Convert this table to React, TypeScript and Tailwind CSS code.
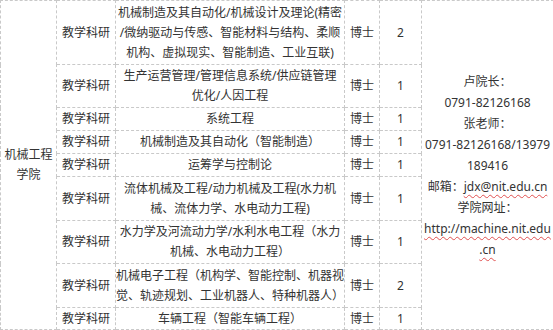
const rows: { spec: string[]; num: string; h: string }[] = [
  {
    spec: [
      "机械制造及其自动化/机械设计及理论(精密",
      "/微纳驱动与传感、智能材料与结构、柔顺",
      "机构、虚拟现实、智能制造、工业互联)",
    ],
    num: "2",
    h: "h-[64px]",
  },
  { spec: ["生产运营管理/管理信息系统/供应链管理", "优化/人因工程"], num: "1", h: "h-[43px]" },
  { spec: ["系统工程"], num: "1", h: "h-[23px]" },
  { spec: ["机械制造及其自动化（智能制造）"], num: "1", h: "h-[23px]" },
  { spec: ["运筹学与控制论"], num: "1", h: "h-[23px]" },
  { spec: ["流体机械及工程/动力机械及工程(水力机", "械、流体力学、水电动力工程)"], num: "1", h: "h-[44px]" },
  { spec: ["水力学及河流动力学/水利水电工程（水力", "机械、水电动力工程）"], num: "1", h: "h-[43px]" },
  { spec: ["机械电子工程（机构学、智能控制、机器视", "觉、轨迹规划、工业机器人、特种机器人）"], num: "2", h: "h-[44px]" },
  { spec: ["车辆工程（智能车辆工程）"], num: "1", h: "h-[22px]" },
];

const cell = "border border-dashed border-[#c9c9c9] p-0 text-center align-middle";
const wavy = "underline decoration-wavy decoration-[#e05050] decoration-[1px] underline-offset-[3px]";

export default function App() {
  return (
    <div className="w-[553px] h-[330px] bg-white overflow-hidden font-['Noto_Sans','Noto_Sans_CJK_SC',sans-serif] text-[12px] leading-[20px] text-[#333]">
      <table className="w-[553px] table-fixed border-collapse">
        <colgroup>
          <col className="w-[56px]" />
          <col className="w-[59px]" />
          <col className="w-[229px]" />
          <col className="w-[35px]" />
          <col className="w-[42px]" />
          <col className="w-[132px]" />
        </colgroup>
        <tbody>
          {rows.map((r, i) => (
            <tr key={i} className={r.h}>
              {i === 0 && (
                <td rowSpan={rows.length} className={cell}>
                  机械工程
                  <br />
                  学院
                </td>
              )}
              <td className={cell}>教学科研</td>
              <td className={`${cell} whitespace-nowrap`}>
                {r.spec.map((line, j) => (
                  <div key={j}>{line}</div>
                ))}
              </td>
              <td className={cell}>博士</td>
              <td className={cell}>{r.num}</td>
              {i === 0 && (
                <td rowSpan={rows.length} className={`${cell} whitespace-nowrap leading-[21px]`}>
                  <div>卢院长：</div>
                  <div>0791-82126168</div>
                  <div>张老师：</div>
                  <div>0791-82126168/13979</div>
                  <div>189416</div>
                  <div>
                    邮箱：<span className={wavy}>jdx@nit.edu.cn</span>
                  </div>
                  <div>学院网址：</div>
                  <div className={wavy}>http://machine.nit.edu</div>
                  <div>
                    <span className={wavy}>.cn</span>
                  </div>
                </td>
              )}
            </tr>
          ))}
        </tbody>
      </table>
    </div>
  );
}
